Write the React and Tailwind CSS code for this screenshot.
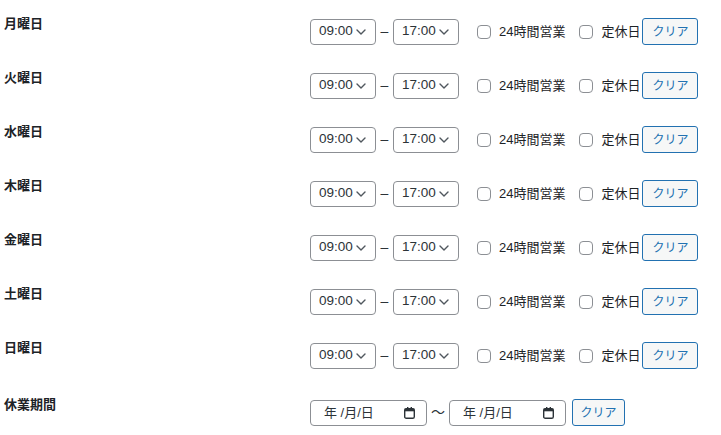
import React from "react";

const days = ["月曜日", "火曜日", "水曜日", "木曜日", "金曜日", "土曜日", "日曜日"];

const font = { fontFamily: '"Liberation Sans", "Noto Sans CJK JP", sans-serif' };

const Chevron = () => (
  <svg width="10" height="6" viewBox="0 0 10 6" fill="none" className="shrink-0">
    <path d="M1 1l4 4 4-4" stroke="#50575e" strokeWidth="1.4" strokeLinecap="round" strokeLinejoin="round" />
  </svg>
);

const CalendarIcon = () => (
  <svg width="11" height="12" viewBox="0 0 11 12" className="shrink-0">
    <rect x="3" y="0" width="1.4" height="2.5" fill="#2c3338" />
    <rect x="6.6" y="0" width="1.4" height="2.5" fill="#2c3338" />
    <rect x="0.7" y="1.7" width="9.6" height="9.6" rx="1.6" fill="none" stroke="#2c3338" strokeWidth="1.4" />
    <rect x="0.7" y="1.7" width="9.6" height="2.6" fill="#2c3338" />
  </svg>
);

const TimeSelect = ({ value, className = "" }) => (
  <div
    className={`flex items-center justify-between h-[26px] w-[66px] pl-[8px] pr-[9px] border border-[#8c8f94] rounded-[4px] bg-white text-[13.5px] text-[#2c3338] ${className}`}
  >
    <span>{value}</span>
    <Chevron />
  </div>
);

const Checkbox = ({ className = "" }) => (
  <span className={`inline-block w-[14px] h-[14px] border border-[#8c8f94] rounded-[4px] bg-white shrink-0 ${className}`} />
);

const ClearButton = ({ className = "" }) => (
  <button
    className={`flex items-center justify-center h-[27px] border border-[#2271b1] rounded-[3px] bg-[#f6f7f7] text-[12px] text-[#2271b1] ${className}`}
  >
    クリア
  </button>
);

const DateInput = ({ className = "" }) => (
  <div
    className={`flex items-center justify-between h-[26px] w-[117px] pl-[13px] pr-[11px] border border-[#8c8f94] rounded-[4px] bg-white text-[13px] text-[#2c3338] ${className}`}
  >
    <span>年 /月/日</span>
    <CalendarIcon />
  </div>
);

export default function App() {
  return (
    <div className="w-[721px] h-[435px] bg-white text-[#1d2327] overflow-hidden" style={font}>
      {days.map((day) => (
        <div key={day} className="flex items-start h-[54px]">
          <div className="w-[310px] pl-[4px] pt-[14px] text-[13px] font-bold leading-[20px]">{day}</div>
          <div className="flex items-center pt-[18px]">
            <TimeSelect value="09:00" />
            <span className="w-[17px] text-center text-[14px] text-[#2c3338]">–</span>
            <TimeSelect value="17:00" />
            <Checkbox className="ml-[18px]" />
            <span className="ml-[8px] text-[13px] text-[#1d2327]">24時間営業</span>
            <Checkbox className="ml-[14px]" />
            <span className="ml-[8px] text-[13px] text-[#1d2327]">定休日</span>
            <ClearButton className="ml-[2px] w-[56px]" />
          </div>
        </div>
      ))}
      <div className="flex items-start">
        <div className="w-[310px] pl-[4px] pt-[17px] text-[13px] font-bold leading-[20px]">休業期間</div>
        <div className="flex items-center pt-[21px]">
          <DateInput />
          <span className="w-[22px] text-center text-[14px] text-[#2c3338]">〜</span>
          <DateInput />
          <ClearButton className="ml-[6px] w-[53px]" />
        </div>
      </div>
    </div>
  );
}
